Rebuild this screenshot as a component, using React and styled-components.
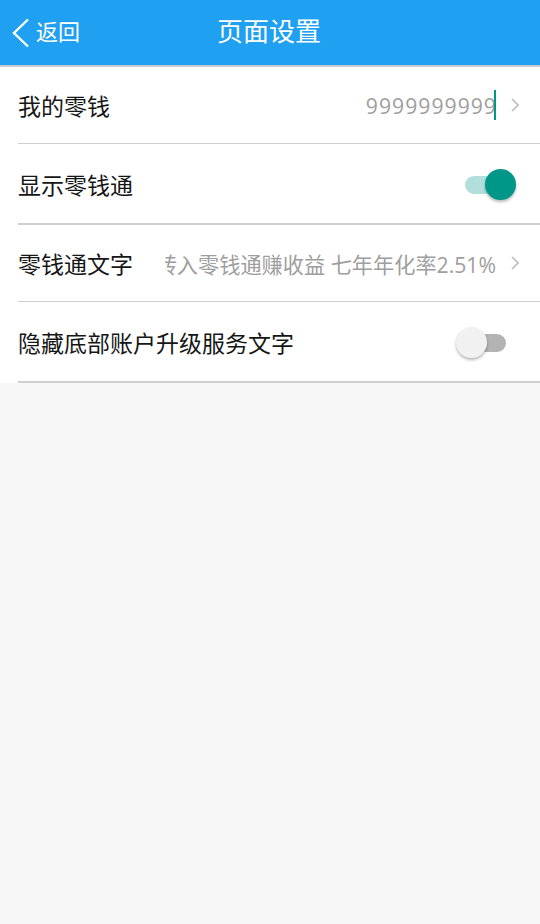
import React from 'react';
import styled, { createGlobalStyle } from 'styled-components';

const GlobalStyle = createGlobalStyle`
    html, body {
        margin: 0;
        padding: 0;
        background: #f7f7f7;
        font-family: Roboto, "Noto Sans CJK SC", "Noto Sans", sans-serif;
    }
`;

function Chevron() {
    return (
        <ChevronIcon viewBox="0 0 10 16" width="10" height="16">
            <path d="M2 2 L8 8 L2 14" fill="none" stroke="#bdbdbd" strokeWidth="1.6" />
        </ChevronIcon>
    );
}

function App() {
    return (
        <Page>
            <GlobalStyle />
            <Header>
                <Back>
                    <svg viewBox="0 0 20 30" width="20" height="30">
                        <path d="M17 1.5 L3 15 L17 28.5" fill="none" stroke="#fff" strokeWidth="2.4" />
                    </svg>
                    <BackText>返回</BackText>
                </Back>
                <Title>页面设置</Title>
            </Header>
            <List>
                <Row>
                    <Label>我的零钱</Label>
                    <Value>
                        <ValueText $spaced>9999999999</ValueText>
                        <Cursor />
                    </Value>
                    <Chevron />
                </Row>
                <Row $tall $thick>
                    <Label>显示零钱通</Label>
                    <Switch $on>
                        <Track $on />
                        <Thumb $on />
                    </Switch>
                </Row>
                <Row>
                    <Label>零钱通文字</Label>
                    <Value>
                        <ValueText>转入零钱通赚收益 七年年化率2.51%</ValueText>
                    </Value>
                    <Chevron />
                </Row>
                <Row $tall $thick>
                    <Label>隐藏底部账户升级服务文字</Label>
                    <Switch>
                        <Track />
                        <Thumb />
                    </Switch>
                </Row>
            </List>
        </Page>
    );
}

export default App;

const Page = styled.div`
    min-height: 924px;
    background: #f7f7f7;
`;

const Header = styled.div`
    position: relative;
    height: 65px;
    background: #1fa0f1;
    border-bottom: 2px solid #c6cdd2;
    display: flex;
    align-items: center;
    justify-content: center;
    color: #fff;
`;

const Back = styled.div`
    position: absolute;
    left: 11px;
    top: 18px;
    display: flex;
    align-items: center;
    gap: 5px;
`;

const BackText = styled.span`
    font-size: 22px;
    line-height: 30px;
`;

const Title = styled.div`
    font-size: 26px;
    line-height: 30px;
    padding-bottom: 1px;
    margin-left: -2px;
`;

const List = styled.div`
    background: #fff;
`;

const Row = styled.div`
    height: ${p => (p.$tall ? '79px' : '76px')};
    margin-left: 18px;
    padding-right: 20px;
    border-bottom: ${p => (p.$thick ? '2px' : '1px')} solid #cfcfcf;
    display: flex;
    align-items: center;
`;

const Label = styled.div`
    font-size: 23px;
    color: #161616;
    white-space: nowrap;
    margin-right: 32px;
    flex-shrink: 0;
`;

const Value = styled.div`
    flex: 1;
    min-width: 0;
    overflow: hidden;
    display: flex;
    justify-content: flex-end;
    align-items: center;
    margin-right: 14px;
`;

const ValueText = styled.span`
    font-family: "Open Sans", "Noto Sans CJK SC", sans-serif;
    font-size: 21.2px;
    letter-spacing: ${p => (p.$spaced ? '1px' : '0')};
    color: #9e9e9e;
    white-space: nowrap;
    flex-shrink: 0;
`;

const Cursor = styled.span`
    width: 2px;
    height: 30px;
    margin-left: -3px;
    background: #009688;
    flex-shrink: 0;
`;

const ChevronIcon = styled.svg`
    flex-shrink: 0;
`;

const Switch = styled.div`
    position: relative;
    margin-left: auto;
    margin-right: ${p => (p.$on ? '3px' : '14px')};
    width: ${p => (p.$on ? '52px' : '50px')};
    height: 32px;
`;

const Track = styled.div`
    position: absolute;
    left: ${p => (p.$on ? '0' : '14px')};
    right: ${p => (p.$on ? '4px' : '0')};
    top: 8px;
    height: 18px;
    border-radius: 9px;
    background: ${p => (p.$on ? '#b2dfdb' : '#b3b3b3')};
`;

const Thumb = styled.div`
    position: absolute;
    top: 1px;
    left: ${p => (p.$on ? '20px' : '0')};
    width: 31px;
    height: 31px;
    border-radius: 50%;
    background: ${p => (p.$on ? '#009688' : '#f1f1f1')};
    box-shadow: 0 2px 3px rgba(0, 0, 0, 0.28);
`;
